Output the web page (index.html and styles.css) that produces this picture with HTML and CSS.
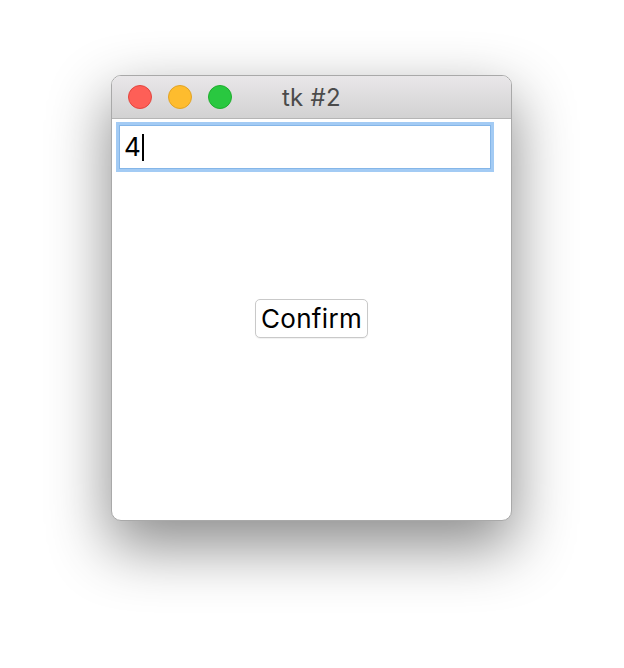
FILE: index.html
```html
<!DOCTYPE html>
<html>
<head>
<meta charset="utf-8">
<link rel="stylesheet" href="styles.css">
</head>
<body>
<div class="window">
  <div class="titlebar">
    <div class="lights">
      <span class="light red"></span>
      <span class="light yellow"></span>
      <span class="light green"></span>
    </div>
    <div class="title">tk #2</div>
  </div>
  <div class="content">
    <div class="entry"><span class="value">4</span><span class="caret"></span></div>
    <button class="btn">Confirm</button>
  </div>
</div>
</body>
</html>
```
FILE: styles.css
```css
html, body {
  margin: 0;
  padding: 0;
  background: #ffffff;
}
body {
  width: 624px;
  height: 668px;
  padding: 75px 0 0 111px;
  box-sizing: border-box;
  font-family: Inter, "Liberation Sans", sans-serif;
}
.window {
  width: 401px;
  height: 446px;
  box-sizing: border-box;
  border: 1px solid #a9a9a9;
  border-radius: 10px;
  overflow: hidden;
  background: #ffffff;
  box-shadow: 0 24px 60px 2px rgba(0, 0, 0, 0.45);
  display: flex;
  flex-direction: column;
}
.titlebar {
  height: 43px;
  box-sizing: border-box;
  background: linear-gradient(#e9e7e9, #d2d2d2);
  border-bottom: 1px solid #b5b5b5;
  display: flex;
  align-items: center;
  position: relative;
}
.lights {
  display: flex;
  gap: 16px;
  padding-left: 16px;
}
.light {
  width: 24px;
  height: 24px;
  border-radius: 50%;
  box-sizing: border-box;
}
.red { background: #fe5f57; border: 1px solid #e2463f; }
.yellow { background: #febc2e; border: 1px solid #e1a325; }
.green { background: #29c840; border: 1px solid #1fad2e; }
.title {
  position: absolute;
  left: 0;
  right: 0;
  top: 0;
  bottom: 0;
  display: flex;
  align-items: center;
  justify-content: center;
  font-size: 24px;
  letter-spacing: 0.3px;
  color: #4b4b4b;
  padding-top: 1px;
}
.content {
  flex: 1;
  display: flex;
  flex-direction: column;
  align-items: center;
  padding: 3px 0 0 4px;
}
.entry {
  align-self: flex-start;
  width: 378px;
  height: 50px;
  box-sizing: border-box;
  border: 3px solid #a3cbf4;
  box-shadow: inset 0 0 0 1px #85b6e8;
  background: #ffffff;
  display: flex;
  align-items: center;
  padding-left: 5px;
  font-size: 26px;
  color: #000;
}
.value {
  line-height: 1;
}
.caret {
  width: 2px;
  height: 27px;
  background: #000;
  margin-left: 1px;
}
.btn {
  margin-top: 127px;
  margin-right: 4px;
  width: 113px;
  height: 39px;
  background: #fff;
  border: 1px solid #c9c9c9;
  border-radius: 5px;
  box-shadow: 0 1px 1px rgba(0,0,0,0.06);
  font-family: Inter, "Liberation Sans", sans-serif;
  font-size: 26px;
  letter-spacing: 0.3px;
  color: #000;
  padding: 0;
}
```
